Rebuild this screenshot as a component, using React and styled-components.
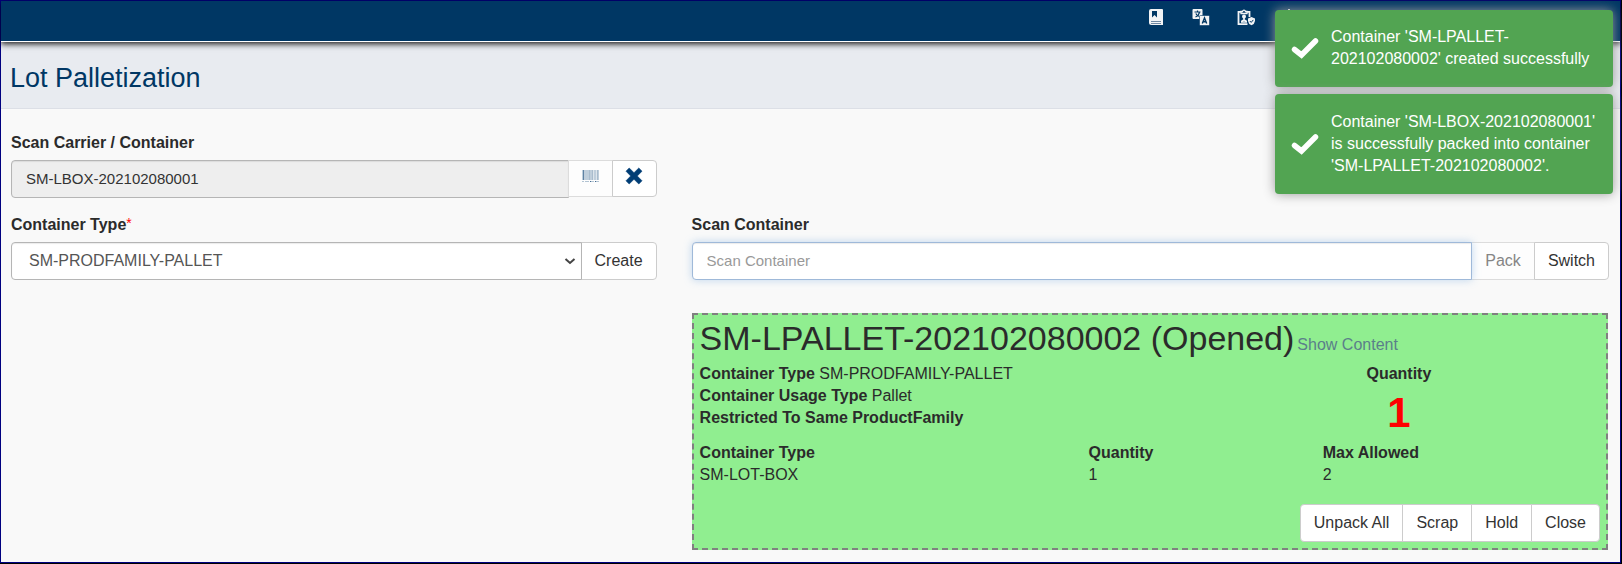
import React from "react";
import styled, { createGlobalStyle, css } from "styled-components";

const GlobalStyle = createGlobalStyle`
  *, *::before, *::after { box-sizing: border-box; }
  html { background: #000; }
  body {
    margin: 0;
    font-family: "Liberation Sans", Arial, sans-serif;
    font-size: 16px;
    line-height: 22px;
    color: #2b2b2b;
  }
  button, input, select { font-family: inherit; line-height: 22px; margin: 0; }
`;

const Page = styled.div`
  margin: 0 1px 1px 0;
  border: 1px solid #000080;
  background: #f9f9f9;
`;

const TopBar = styled.header`
  position: relative;
  height: 41px;
  background: #003764;
  border-bottom: 1px solid #fff;
  box-shadow: 0 2px 6px rgba(0, 0, 0, 0.9);
`;

const Nav = styled.nav`
  display: flex;
  justify-content: flex-end;
`;

const NavButton = styled.button`
  display: flex;
  justify-content: center;
  width: ${(p) => p.$width || 45}px;
  margin-left: ${(p) => p.$space || 0}px;
  padding: 7px 0 0;
  border: 0;
  background: none;
  color: #f1f3f5;
`;

const TitleBar = styled.div`
  padding: 21px 9px 15px;
  background: #e8ebf0;
  border-bottom: 1px solid #dcdfe6;
`;

const Title = styled.h1`
  margin: 0;
  font-size: 27px;
  font-weight: 400;
  line-height: 30px;
  color: #003764;
`;

const Main = styled.main`
  display: grid;
  grid-template-columns: minmax(0, 5fr) minmax(0, 7fr);
  row-gap: 16px;
  align-items: start;
  padding: 23px 0 12px;
`;

const LeftCell = styled.div`
  grid-column: 1;
  padding: 0 19px 0 10px;
`;

const RightCell = styled.div`
  grid-column: 2;
  padding: 0 11px 0 16px;
`;

const Label = styled.label`
  display: block;
  margin-bottom: 6px;
  font-weight: 700;
`;

const Required = styled.span`
  color: #f00;
  font-size: 14px;
  font-weight: 400;
  vertical-align: top;
  line-height: 18px;
`;

const Group = styled.div`
  display: flex;
  align-items: flex-start;

  > * { border-radius: 0; }
  > * + * { margin-left: -1px; }
  > :first-child { border-top-left-radius: 4px; border-bottom-left-radius: 4px; }
  > :last-child { border-top-right-radius: 4px; border-bottom-right-radius: 4px; }
`;

const control = css`
  flex: 1;
  min-width: 0;
  height: 38px;
  border: 1px solid #b5b5b5;
  background: #fff;
  color: #555;
`;

const TextInput = styled.input`
  ${control}
  padding: 6px 14px 8px;
  font-size: 15px;
  box-shadow: inset 0 1px 1px rgba(0, 0, 0, 0.08);

  &::placeholder { color: #999; opacity: 1; }
  &:read-only { background: #eee; color: #333; }
  &:focus {
    position: relative;
    outline: 0;
    border-color: #9fb9d9;
    caret-color: #000;
    box-shadow: inset 0 1px 1px rgba(0, 0, 0, 0.08), 0 0 8px rgba(102, 160, 220, 0.4);
  }
`;

const SelectWrap = styled.div`
  position: relative;
  display: flex;
  flex: 1;
  min-width: 0;

  svg { position: absolute; right: 6px; top: 15px; pointer-events: none; }
`;

const Select = styled.select`
  ${control}
  appearance: none;
  padding: 7px 17px;
  font-size: 16px;
  border-radius: 4px 0 0 4px;
  box-shadow: inset 0 1px 1px rgba(0, 0, 0, 0.08);
`;

const Button = styled.button`
  height: 38px;
  padding: 0 13px;
  border: 1px solid #ccc;
  background: #fff;
  color: #333;
  font-size: 16px;

  &:disabled { background: #fdfdfd; border-color: #dcdcdc; color: #858585; }
`;

const IconButton = styled(Button)`
  display: flex;
  justify-content: center;
  width: 45px;
  height: 37px;
  padding: ${(p) => p.$top || 6}px 0 0;
`;

const Panel = styled.section`
  margin: 33px 1px 0 0;
  padding: 4px 6px 6px;
  border: 2px dashed #808080;
  background: #90ee90;
`;

const PanelHead = styled.div`
  display: flex;
  align-items: baseline;
  gap: 3px;
  margin-bottom: 6px;
`;

const PanelTitle = styled.h2`
  margin: 0;
  font-size: 34px;
  font-weight: 400;
  line-height: 38px;
`;

const ContentLink = styled.a`
  color: #5b7f8a;
  text-decoration: none;
`;

const Summary = styled.div`
  display: grid;
  grid-template-columns: 581fr 236fr 83fr;
`;

const QuantityBox = styled.div`
  text-align: center;
  font-weight: 700;
`;

const BigNumber = styled.div`
  font-size: 42px;
  line-height: 56px;
  color: #f00;
`;

const LimitTable = styled.table`
  width: 100%;
  margin-top: 1px;
  table-layout: fixed;
  border-collapse: collapse;

  th, td { padding: 0; text-align: left; }
  th:nth-child(1) { width: 389px; }
  th:nth-child(2) { width: 26%; }
`;

const Actions = styled(Group)`
  justify-content: flex-end;
  margin-top: 18px;
`;

const Toasts = styled.div`
  position: absolute;
  z-index: 2;
  top: 10px;
  right: 9px;
  display: grid;
  gap: 7px;
  width: 338px;
`;

const Toast = styled.div`
  display: flex;
  align-items: center;
  gap: 12px;
  padding: 16px 14px 17px 16px;
  border-radius: 4px;
  background: #52a452;
  box-shadow: 0 0 12px #999;
  color: #fff;

  & + & { padding-top: 17px; }

  svg { flex: none; }
`;

const BookIcon = () => (
  <svg width="16" height="18" viewBox="0 0 16 18">
    <path d="M3 1H14a1 1 0 0 1 1 1V17H3.5A2.5 2.5 0 0 1 1 14.5V3a2 2 0 0 1 2-2Z" fill="currentColor" />
    <path d="M4 3H9V9.500L6.500 7L4 9.500Z" fill="#003764" />
    <path d="M3 13.500H13M3 15.500H13" stroke="#6f88a2" fill="none" />
  </svg>
);

const TranslateIcon = () => (
  <svg width="18" height="18" viewBox="0 0 18 18">
    <rect x="0.500" y="1" width="10" height="10" rx="1" fill="currentColor" />
    <path d="M2.500 4H8.500M5.500 2.500V4M3.500 9Q7 7.500 7.500 4M3.800 5.500Q5 8 7.500 8.500" stroke="#003764" strokeWidth="1.200" fill="none" />
    <rect x="7.500" y="7.500" width="10" height="10" rx="1" fill="currentColor" stroke="#003764" strokeWidth="0.600" />
    <path d="M10.300 15.500L12.500 10L14.700 15.500M11 13.800H14" stroke="#003764" strokeWidth="1.400" fill="none" />
  </svg>
);

const ClipboardIcon = () => (
  <svg width="18" height="18" viewBox="0 0 18 18" fill="none" stroke="currentColor">
    <path d="M10.500 16.200H1.500V3.800H4M10 3.800H12.500V9" strokeWidth="1.800" />
    <path d="M4 3.500H5.500A1.600 2 0 0 1 8.500 3.500H10V5.500H4Z" strokeWidth="1.300" />
    <circle cx="7" cy="8.500" r="2" fill="currentColor" stroke="none" />
    <path d="M7 9V13M4 14H10M4.500 13.500Q7 10.500 9.500 13.500" strokeWidth="1.700" />
    <path d="M14.500 9L18 10.500V13Q17.600 16 14.500 17.300Q11.400 16 11 13V10.500Z" fill="currentColor" stroke="none" />
    <path d="M12.800 13L14.200 14.400L16.300 11.900" stroke="#003764" />
  </svg>
);

const BellIcon = () => (
  <svg width="18" height="18" viewBox="0 0 18 18" fill="currentColor">
    <path d="M6 1H8V3Q12 4 12 9V13L14 15H0L2 13V9Q2 4 6 3Z" />
  </svg>
);

const UserIcon = () => (
  <svg width="18" height="18" viewBox="0 0 18 18" fill="currentColor">
    <rect x="5" y="2" width="8" height="8" rx="2" />
    <path d="M1 17Q2 11 9 11T17 17Z" />
  </svg>
);

const PinIcon = () => (
  <svg width="18" height="18" viewBox="0 0 18 18" stroke="currentColor" strokeWidth="2">
    <path d="M6 2V16" />
  </svg>
);

const MenuIcon = () => (
  <svg width="18" height="18" viewBox="0 0 18 18" stroke="currentColor" strokeWidth="2">
    <path d="M4 3H15M4 9H15M4 15H15" />
  </svg>
);

const BarcodeIcon = () => (
  <svg width="17" height="12" viewBox="0 0 17 12" shapeRendering="crispEdges">
    <path d="M0 0H17V10H0Z" fill="#bfcedb" />
    <path d="M1 0H2V10H1Z" fill="#5f82a3" />
    <path d="M7 0H8V10H7ZM10 0H11V10H10ZM15 0H16V10H15Z" fill="#a9bccd" />
    <path d="M11 0H12V10H11ZM14 0H15V10H14Z" fill="#dde5ec" />
    <path d="M0 11H2V12H0ZM3 11H7V12H3ZM9 11H12V12H9ZM14 11H17V12H14Z" fill="#b3c4d3" />
    <path d="M8 11H9V12H8ZM13 11H14V12H13Z" fill="#436b92" />
  </svg>
);

const RemoveIcon = () => (
  <svg width="18" height="18" viewBox="0 0 18 18">
    <path
      d="M4.200 1L9 5.700L13.800 1L17 4.200L12.300 9L17 13.800L13.800 17L9 12.300L4.200 17L1 13.800L5.700 9L1 4.200Z"
      fill="#003d75"
      stroke="#003d75"
      strokeWidth="0.600"
      strokeLinejoin="round"
    />
  </svg>
);

const ChevronIcon = () => (
  <svg width="12" height="8" viewBox="0 0 12 8">
    <path d="M1.500 2L6 6L10.500 2" fill="none" stroke="#444" strokeWidth="2" />
  </svg>
);

const CheckIcon = () => (
  <svg width="28" height="22" viewBox="0 0 28 22">
    <path d="M3.500 12.500L10.500 18L24.500 4" fill="none" stroke="#fff" strokeWidth="5.500" strokeLinecap="round" />
  </svg>
);

const navItems = [
  { name: "Manual", Icon: BookIcon },
  { name: "Language", Icon: TranslateIcon },
  { name: "Permissions", Icon: ClipboardIcon },
  { name: "Alerts", Icon: BellIcon },
  { name: "Account", Icon: UserIcon, space: 45 },
  { name: "Pinned", Icon: PinIcon },
  { name: "Menu", Icon: MenuIcon, space: 136, width: 36 },
];

const messages = [
  "Container 'SM-LPALLET-202102080002' created successfully",
  "Container 'SM-LBOX-202102080001' is successfully packed into container 'SM-LPALLET-202102080002'.",
];

export default function App() {
  return (
    <>
      <GlobalStyle />
      <Page>
        <TopBar>
          <Nav>
            {navItems.map(({ name, Icon, space, width }) => (
              <NavButton key={name} type="button" aria-label={name} $space={space} $width={width}>
                <Icon />
              </NavButton>
            ))}
          </Nav>
        </TopBar>
        <TitleBar>
          <Title>Lot Palletization</Title>
        </TitleBar>
        <Main>
          <LeftCell>
            <Label htmlFor="carrier">Scan Carrier / Container</Label>
            <Group>
              <TextInput id="carrier" readOnly value="SM-LBOX-202102080001" />
              <IconButton type="button" disabled aria-label="Scan" $top={9}>
                <BarcodeIcon />
              </IconButton>
              <IconButton type="button" aria-label="Clear">
                <RemoveIcon />
              </IconButton>
            </Group>
          </LeftCell>
          <LeftCell>
            <Label htmlFor="type">
              Container Type<Required>*</Required>
            </Label>
            <Group>
              <SelectWrap>
                <Select id="type" defaultValue="SM-PRODFAMILY-PALLET">
                  <option>SM-PRODFAMILY-PALLET</option>
                </Select>
                <ChevronIcon />
              </SelectWrap>
              <Button type="button">Create</Button>
            </Group>
          </LeftCell>
          <RightCell>
            <Label htmlFor="container">Scan Container</Label>
            <Group>
              <TextInput id="container" placeholder="Scan Container" autoFocus />
              <Button type="button" disabled>Pack</Button>
              <Button type="button">Switch</Button>
            </Group>
            <Panel>
              <PanelHead>
                <PanelTitle>SM-LPALLET-202102080002 (Opened)</PanelTitle>
                <ContentLink href="#content">Show Content</ContentLink>
              </PanelHead>
              <Summary>
                <div>
                  <div><b>Container Type</b> SM-PRODFAMILY-PALLET</div>
                  <div><b>Container Usage Type</b> Pallet</div>
                  <div><b>Restricted To Same ProductFamily</b></div>
                </div>
                <QuantityBox>
                  Quantity
                  <BigNumber>1</BigNumber>
                </QuantityBox>
              </Summary>
              <LimitTable>
                <thead>
                  <tr>
                    <th>Container Type</th>
                    <th>Quantity</th>
                    <th>Max Allowed</th>
                  </tr>
                </thead>
                <tbody>
                  <tr>
                    <td>SM-LOT-BOX</td>
                    <td>1</td>
                    <td>2</td>
                  </tr>
                </tbody>
              </LimitTable>
              <Actions>
                <Button type="button">Unpack All</Button>
                <Button type="button">Scrap</Button>
                <Button type="button">Hold</Button>
                <Button type="button">Close</Button>
              </Actions>
            </Panel>
          </RightCell>
        </Main>
      </Page>
      <Toasts role="status">
        {messages.map((text) => (
          <Toast key={text}>
            <CheckIcon />
            <span>{text}</span>
          </Toast>
        ))}
      </Toasts>
    </>
  );
}
